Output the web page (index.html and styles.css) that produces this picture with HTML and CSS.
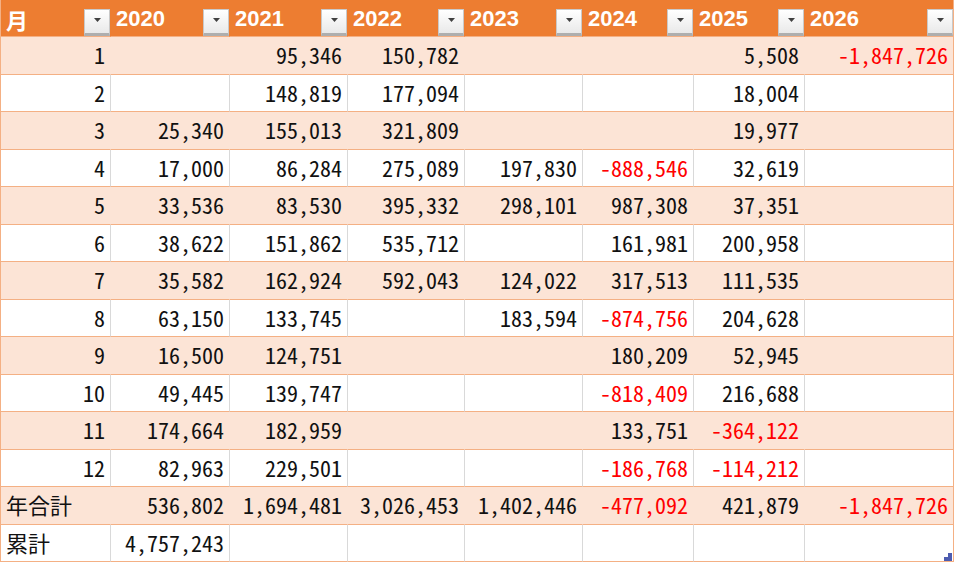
FILE: index.html
```html
<!DOCTYPE html>
<html lang="ja">
<head>
<meta charset="utf-8">
<title>年別集計</title>
<link rel="stylesheet" href="styles.css">
</head>
<body>
<div class="sheet">
  <div class="row head">
    <div><span>月</span><span class="btn"><svg width="7" height="4" viewBox="0 0 7 4"><polygon points="0,0 7,0 3.5,4" fill="#404040"/></svg></span></div>
    <div><span>2020</span><span class="btn"><svg width="7" height="4" viewBox="0 0 7 4"><polygon points="0,0 7,0 3.5,4" fill="#404040"/></svg></span></div>
    <div><span>2021</span><span class="btn"><svg width="7" height="4" viewBox="0 0 7 4"><polygon points="0,0 7,0 3.5,4" fill="#404040"/></svg></span></div>
    <div><span>2022</span><span class="btn"><svg width="7" height="4" viewBox="0 0 7 4"><polygon points="0,0 7,0 3.5,4" fill="#404040"/></svg></span></div>
    <div><span>2023</span><span class="btn"><svg width="7" height="4" viewBox="0 0 7 4"><polygon points="0,0 7,0 3.5,4" fill="#404040"/></svg></span></div>
    <div><span>2024</span><span class="btn"><svg width="7" height="4" viewBox="0 0 7 4"><polygon points="0,0 7,0 3.5,4" fill="#404040"/></svg></span></div>
    <div><span>2025</span><span class="btn"><svg width="7" height="4" viewBox="0 0 7 4"><polygon points="0,0 7,0 3.5,4" fill="#404040"/></svg></span></div>
    <div><span>2026</span><span class="btn"><svg width="7" height="4" viewBox="0 0 7 4"><polygon points="0,0 7,0 3.5,4" fill="#404040"/></svg></span></div>
  </div>
  <div class="row band"><div>1</div><div></div><div>95,346</div><div>150,782</div><div></div><div></div><div>5,508</div><div class="neg">-1,847,726</div></div>
  <div class="row"><div>2</div><div></div><div>148,819</div><div>177,094</div><div></div><div></div><div>18,004</div><div></div></div>
  <div class="row band"><div>3</div><div>25,340</div><div>155,013</div><div>321,809</div><div></div><div></div><div>19,977</div><div></div></div>
  <div class="row"><div>4</div><div>17,000</div><div>86,284</div><div>275,089</div><div>197,830</div><div class="neg">-888,546</div><div>32,619</div><div></div></div>
  <div class="row band"><div>5</div><div>33,536</div><div>83,530</div><div>395,332</div><div>298,101</div><div>987,308</div><div>37,351</div><div></div></div>
  <div class="row"><div>6</div><div>38,622</div><div>151,862</div><div>535,712</div><div></div><div>161,981</div><div>200,958</div><div></div></div>
  <div class="row band"><div>7</div><div>35,582</div><div>162,924</div><div>592,043</div><div>124,022</div><div>317,513</div><div>111,535</div><div></div></div>
  <div class="row"><div>8</div><div>63,150</div><div>133,745</div><div></div><div>183,594</div><div class="neg">-874,756</div><div>204,628</div><div></div></div>
  <div class="row band"><div>9</div><div>16,500</div><div>124,751</div><div></div><div></div><div>180,209</div><div>52,945</div><div></div></div>
  <div class="row"><div>10</div><div>49,445</div><div>139,747</div><div></div><div></div><div class="neg">-818,409</div><div>216,688</div><div></div></div>
  <div class="row band"><div>11</div><div>174,664</div><div>182,959</div><div></div><div></div><div>133,751</div><div class="neg">-364,122</div><div></div></div>
  <div class="row"><div>12</div><div>82,963</div><div>229,501</div><div></div><div></div><div class="neg">-186,768</div><div class="neg">-114,212</div><div></div></div>
  <div class="row band"><div class="lbl">年合計</div><div>536,802</div><div>1,694,481</div><div>3,026,453</div><div>1,402,446</div><div class="neg">-477,092</div><div>421,879</div><div class="neg">-1,847,726</div></div>
  <div class="row"><div class="lbl">累計</div><div>4,757,243</div><div></div><div></div><div></div><div></div><div></div><div></div></div>
  <svg class="handle" width="8" height="8" viewBox="0 0 8 8"><polygon points="4,0 8,0 8,8 0,8 0,4 4,4" fill="#4d5cb0"/></svg>
</div>
</body>
</html>
```

FILE: styles.css
```css
html, body {
  margin: 0;
  background: #ffffff;
}
body {
  overflow: hidden;
}
.sheet {
  position: relative;
  display: grid;
  grid-template-columns: 110px 119px 118px 117px 118px 111px 111px 148px;
  grid-template-rows: 37px repeat(14, 37.5px);
  width: 952px;
  border-left: 1px solid #f4b084;
  border-right: 1px solid #f4b084;
  font-family: "Noto Sans Mono CJK JP", "Noto Sans CJK JP", sans-serif;
  font-size: 22px;
  color: #111111;
}
.row {
  display: contents;
}
.row > div {
  box-sizing: border-box;
  border-bottom: 1px solid #f4b084;
  border-right: 1px solid #d9d9d9;
  display: flex;
  align-items: center;
  justify-content: flex-end;
  padding: 0 5px 2px 4px;
  white-space: nowrap;
  overflow: hidden;
  font-feature-settings: "hwid";
}
.row > div:last-child {
  border-right: none;
}
.band > div {
  background: #fce4d6;
  border-right-color: #fce4d6;
}
.row > .neg {
  color: #ff0000;
}
.row > .lbl {
  justify-content: flex-start;
  padding-left: 5px;
}
.head > div {
  background: #ed7d31;
  border-right-color: #ed7d31;
  color: #ffffff;
  font-family: "Liberation Sans", "Noto Sans CJK JP", sans-serif;
  font-weight: bold;
  font-size: 22px;
  justify-content: space-between;
  padding: 2px 0 0 5px;
  font-feature-settings: normal;
}
.btn {
  align-self: flex-end;
  box-sizing: border-box;
  width: 26px;
  height: 27px;
  display: flex;
  align-items: center;
  justify-content: center;
  padding-bottom: 4px;
  background: linear-gradient(#ffffff, #e9e9e9);
  border: 1px solid #c9c9c9;
  border-bottom: 3px solid #aeaeae;
}
.btn svg {
  display: block;
}
.handle {
  position: absolute;
  right: 1px;
  bottom: 1px;
}
```
